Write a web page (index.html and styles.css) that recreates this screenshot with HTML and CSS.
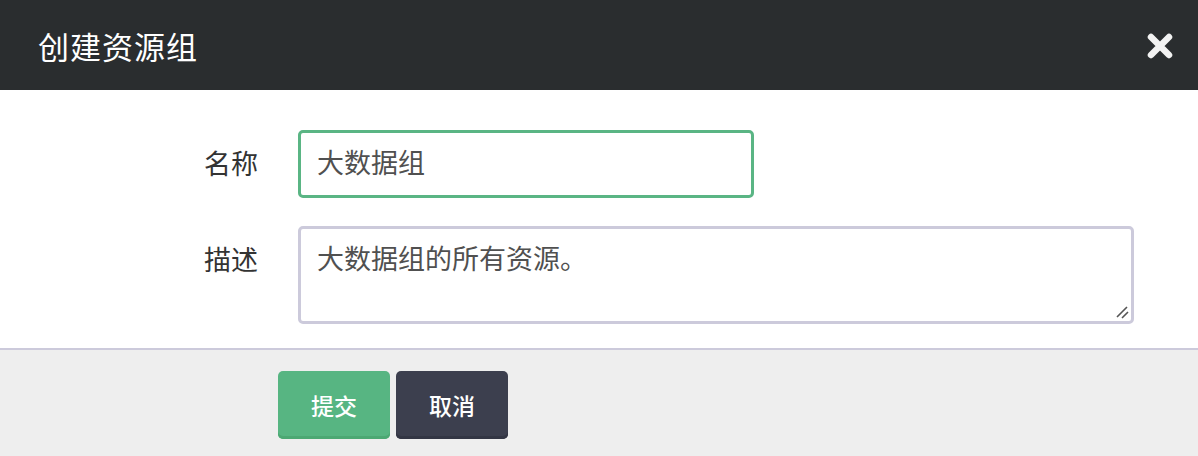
FILE: index.html
```html
<!DOCTYPE html>
<html lang="zh">
<head>
<meta charset="utf-8">
<title>创建资源组</title>
<link rel="stylesheet" href="styles.css">
</head>
<body>
<div class="modal">
  <header class="modal-header">
    <h1 class="modal-title">创建资源组</h1>
    <button class="close" type="button" aria-label="关闭">
      <svg width="26" height="26" viewBox="0 0 26 26"><path d="M4 4 L22 22 M22 4 L4 22" stroke="#f2f2f2" stroke-width="6.5" stroke-linecap="round"/></svg>
    </button>
  </header>
  <div class="modal-body">
    <div class="form-row">
      <label class="form-label">名称</label>
      <div class="field name-field">大数据组</div>
    </div>
    <div class="form-row">
      <label class="form-label">描述</label>
      <div class="field desc-field">大数据组的所有资源。
        <svg class="grip" width="14" height="14" viewBox="0 0 14 14"><path d="M2 12 L12 2 M7 13 L13 7" stroke="#555" stroke-width="1.6"/></svg>
      </div>
    </div>
  </div>
  <footer class="modal-footer">
    <button class="btn btn-primary" type="button">提交</button>
    <button class="btn btn-dark" type="button">取消</button>
  </footer>
</div>
</body>
</html>
```
FILE: styles.css
```css
html, body {
  margin: 0;
  padding: 0;
  background: #ffffff;
}
body {
  font-family: "Noto Sans CJK SC", "Noto Sans", sans-serif;
  width: 1198px;
  height: 456px;
  overflow: hidden;
}
.modal {
  display: flex;
  flex-direction: column;
  height: 456px;
}
.modal-header {
  height: 90px;
  background: #2a2d2f;
  display: flex;
  align-items: center;
  justify-content: space-between;
  padding: 0 25px 0 38px;
  box-sizing: border-box;
}
.modal-title {
  margin: 0;
  color: #ffffff;
  font-size: 31px;
  font-weight: 400;
  letter-spacing: 1px;
  line-height: 1;
}
.close {
  background: none;
  border: 0;
  padding: 0;
  width: 26px;
  height: 26px;
  margin-top: 1px;
  cursor: pointer;
}
.close svg { display: block; }
.modal-body {
  padding: 40px 0 24px;
  display: flex;
  flex-direction: column;
  gap: 28px;
}
.form-row {
  display: flex;
  align-items: flex-start;
}
.form-label {
  width: 298px;
  text-align: right;
  padding-right: 40px;
  box-sizing: border-box;
  color: #333333;
  font-size: 27px;
  line-height: 1;
  padding-top: 19px;
}
.field {
  box-sizing: border-box;
  border: 3px solid #cccadb;
  border-radius: 5px;
  padding: 12px 16px;
  font-size: 27px;
  line-height: 34px;
  color: #505050;
  background: #ffffff;
}
.name-field {
  width: 456px;
  height: 68px;
  border-color: #5ab584;
}
.desc-field {
  position: relative;
  width: 836px;
  height: 98px;
}
.grip {
  position: absolute;
  right: 2px;
  bottom: 2px;
}
.modal-footer {
  flex: 1;
  background: #eeeeee;
  border-top: 2px solid #cccadb;
  padding: 21px 0 0 278px;
  display: flex;
  align-items: flex-start;
  gap: 6px;
}
.btn {
  width: 112px;
  height: 68px;
  border: 0;
  border-radius: 5px;
  color: #ffffff;
  font-family: inherit;
  font-size: 23px;
  font-weight: 500;
  cursor: pointer;
}
.btn-primary {
  background: #57b582;
  box-shadow: inset 0 -3px 0 #4ca873;
}
.btn-dark {
  background: #3c3f4e;
  box-shadow: inset 0 -3px 0 #333644;
}
```
